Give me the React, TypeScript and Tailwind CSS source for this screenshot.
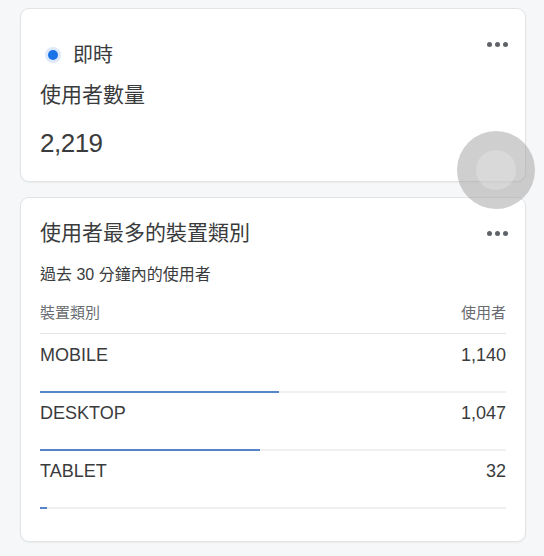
const rows = [
  { name: "MOBILE", users: 1140 },
  { name: "DESKTOP", users: 1047 },
  { name: "TABLET", users: 32 },
]

const total = 2219

function Dots() {
  return (
    <div className="-mr-[2px] flex items-center gap-[3px]">
      <span className="block w-[5px] h-[5px] rounded-full bg-[#5f6368]" />
      <span className="block w-[5px] h-[5px] rounded-full bg-[#5f6368]" />
      <span className="block w-[5px] h-[5px] rounded-full bg-[#5f6368]" />
    </div>
  )
}

export default function App() {
  return (
    <div
      className="relative min-h-[556px] w-[544px] bg-[#f6f7f9] pt-[8px] text-[#3a3b3d]"
      style={{ fontFamily: '"Liberation Sans", "Noto Sans CJK TC", sans-serif' }}
    >
      {/* realtime card */}
      <div className="ml-[20px] w-[506px] rounded-[9px] border border-[#e2e3e5] bg-white px-[19px] pt-[32px] pb-[21px] shadow-[0_1px_2px_rgba(0,0,0,0.05)]">
        <div className="flex items-start justify-between">
          <div className="flex h-[28px] items-center">
            <span className="ml-[8px] block w-[10px] h-[10px] rounded-full bg-[#1a73e8] ring-[3px] ring-[#dde8fb]" />
            <span className="ml-[15px] text-[20px] leading-[28px]">即時</span>
          </div>
          <div className="mt-[1px]">
            <Dots />
          </div>
        </div>
        <div className="mt-[12px] text-[21px] leading-[28px]">使用者數量</div>
        <div className="mt-[17px] text-[26px] leading-[34px] tracking-[-0.5px]">2,219</div>
      </div>

      {/* device category card */}
      <div className="ml-[20px] mt-[15px] w-[506px] rounded-[9px] border border-[#e2e3e5] bg-white px-[19px] pt-[21px] pb-[32px] shadow-[0_1px_2px_rgba(0,0,0,0.05)]">
        <div className="flex items-center justify-between">
          <div className="text-[21px] leading-[28px]">使用者最多的裝置類別</div>
          <Dots />
        </div>
        <div className="mt-[17px] text-[16px] leading-[22px]">過去 30 分鐘內的使用者</div>
        <div className="mt-[17px] flex justify-between pb-[10px] text-[15px] leading-[20px] text-[#696c70] border-b border-[#e3e4e6]">
          <span>裝置類別</span>
          <span>使用者</span>
        </div>
        {rows.map((r, i) => (
          <div key={r.name} className={i === 0 ? "pt-[8px]" : "pt-[7px]"}>
            <div className="flex justify-between text-[18px] leading-[26px]">
              <span>{r.name}</span>
              <span>{r.users.toLocaleString("en-US")}</span>
            </div>
            <div className="mt-[23px] h-[2px] w-full bg-[#eef0f2]">
              <div className="h-[2px] bg-[#5585c8]" style={{ width: `${(r.users / total) * 100}%` }} />
            </div>
          </div>
        ))}
      </div>

      {/* touch indicator */}
      <div className="absolute left-[457px] top-[131px] flex h-[78px] w-[78px] items-center justify-center rounded-full bg-[rgba(160,160,160,0.5)]">
        <div className="h-[40px] w-[40px] rounded-full bg-[rgba(235,235,235,0.35)]" />
      </div>
    </div>
  )
}
